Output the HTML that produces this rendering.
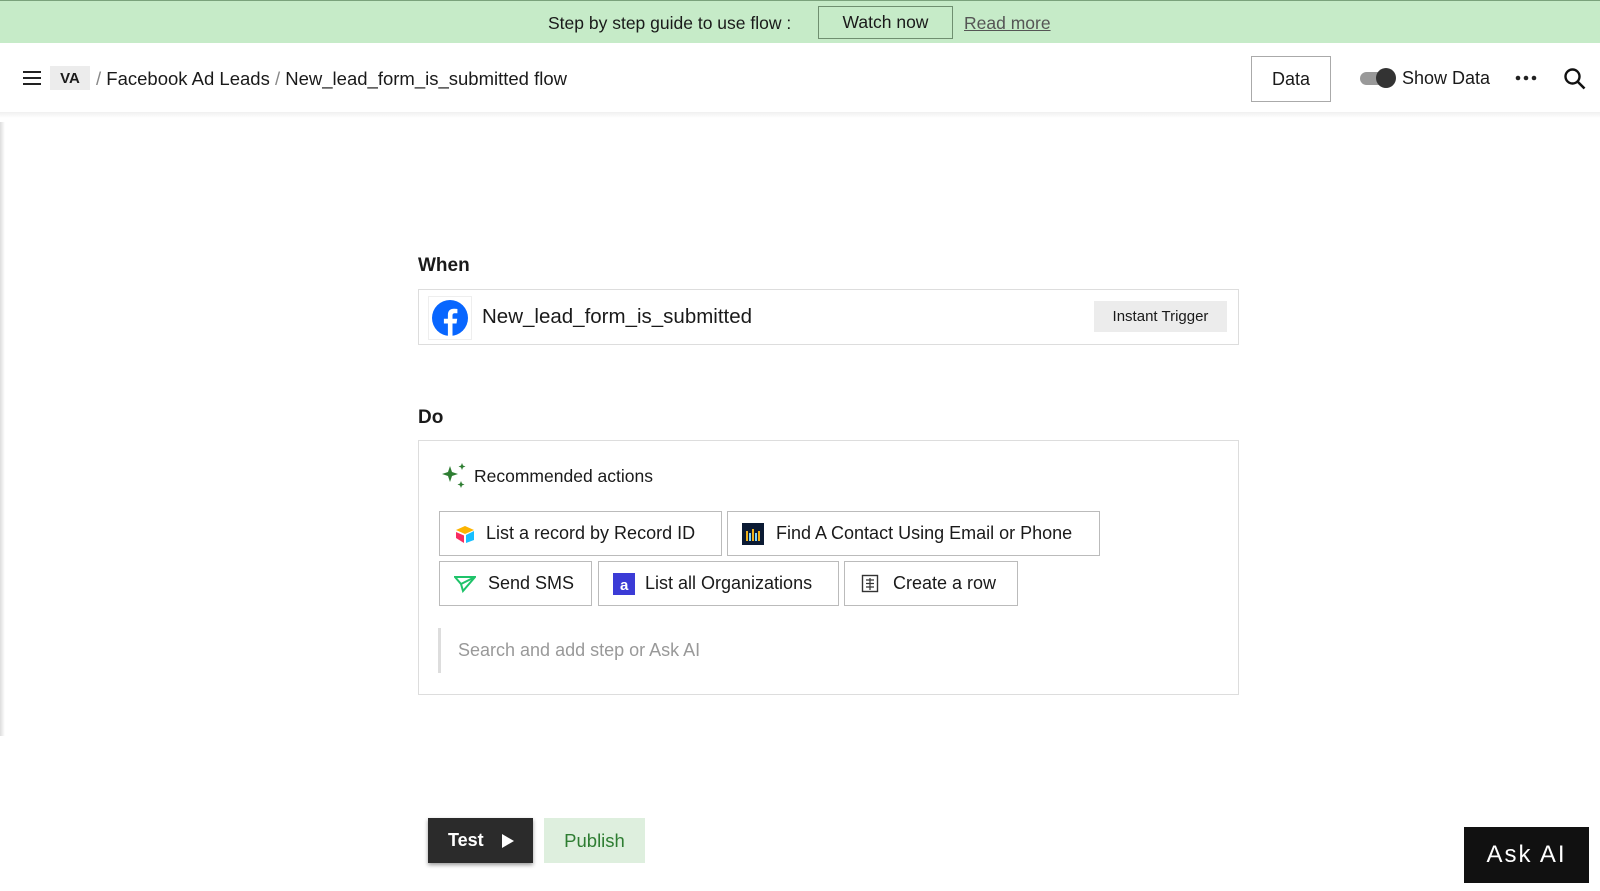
<!DOCTYPE html>
<html><head><meta charset="utf-8"><style>
*{box-sizing:border-box;margin:0;padding:0}
body{width:1600px;height:891px;background:#fff;font-family:"Liberation Sans",sans-serif;color:#1a1a1a;position:relative;overflow:hidden}
.banner{position:absolute;left:0;top:0;width:1600px;height:43px;background:#c6ebc8;border-top:1px solid #7aa27c;font-size:17.5px}
.abs{position:absolute}
.btn{position:absolute;border:1px solid #bbb;background:#fff;display:flex;align-items:center;font-size:18px}
.shadowline{position:absolute;left:0;top:112px;width:1600px;height:6px;background:linear-gradient(#f0f0f0,#fff)}
</style></head><body>
<div class="banner">
 <div class="abs" style="left:548px;top:12px">Step by step guide to use flow :</div>
 <div class="abs" style="left:818px;top:5px;width:135px;height:33px;border:1px solid #6f8f70;display:flex;align-items:center;justify-content:center">Watch now</div>
 <div class="abs" style="left:964px;top:12px;color:#555;text-decoration:underline">Read more</div>
</div>
<svg class="abs" style="left:22px;top:70px" width="20" height="16"><path d="M1 2h18M1 8h18M1 14h18" stroke="#222" stroke-width="2"/></svg>
<div class="abs" style="left:50px;top:66px;width:40px;height:24px;background:#ececec;font-size:15px;font-weight:bold;display:flex;align-items:center;justify-content:center">VA</div>
<div class="abs" style="left:96px;top:68px;font-size:18.5px"><span style="color:#888">/</span> Facebook Ad Leads <span style="color:#888">/</span> New_lead_form_is_submitted flow</div>
<div class="btn" style="left:1251px;top:56px;width:80px;height:46px;justify-content:center;border-color:#aaa">Data</div>
<div class="abs" style="left:1360px;top:72px;width:34px;height:13px;border-radius:7px;background:#999"></div>
<div class="abs" style="left:1376px;top:68px;width:20px;height:20px;border-radius:50%;background:#333"></div>
<div class="abs" style="left:1402px;top:68px;font-size:18px">Show Data</div>
<svg class="abs" style="left:1515px;top:74px" width="22" height="8"><circle cx="3" cy="4" r="2.3" fill="#222"/><circle cx="11" cy="4" r="2.3" fill="#222"/><circle cx="19" cy="4" r="2.3" fill="#222"/></svg>
<svg class="abs" style="left:1563px;top:67px" width="24" height="24"><circle cx="9.5" cy="9.5" r="7" fill="none" stroke="#111" stroke-width="2.4"/><path d="M14.5 14.5l7 7" stroke="#111" stroke-width="2.6"/></svg>
<div class="shadowline"></div>
<div class="abs" style="left:0;top:122px;width:5px;height:614px;background:linear-gradient(90deg,#ddd,#fff)"></div>

<div class="abs" style="left:418px;top:255px;font-size:19px;font-weight:bold">When</div>
<div class="abs" style="left:418px;top:289px;width:821px;height:56px;border:1px solid #ddd"></div>
<div class="abs" style="left:428px;top:296px;width:44px;height:44px;border:1px solid #eee"></div>
<svg class="abs" style="left:432px;top:300px" width="36" height="36" viewBox="0 0 36 36"><circle cx="18" cy="18" r="18" fill="#0866ff"/><path d="M20.5 36V23.5h4l.7-4.8h-4.7v-3c0-1.4.5-2.4 2.4-2.4h2.5V9c-.5-.1-2-.2-3.6-.2-3.6 0-5.9 2.1-5.9 6v3.9h-4v4.8h4V36z" fill="#fff"/></svg>
<div class="abs" style="left:482px;top:305px;font-size:20.5px">New_lead_form_is_submitted</div>
<div class="abs" style="left:1094px;top:301px;width:133px;height:31px;background:#ececec;font-size:15px;display:flex;align-items:center;justify-content:center">Instant Trigger</div>

<div class="abs" style="left:418px;top:407px;font-size:19px;font-weight:bold">Do</div>
<div class="abs" style="left:418px;top:440px;width:821px;height:255px;border:1px solid #ddd"></div>
<svg class="abs" style="left:440px;top:462px" width="28" height="28" viewBox="0 0 28 28"><path d="M10 4l2 6 6 2-6 2-2 6-2-6-6-2 6-2z" fill="#2e7d32"/><path d="M22 1l1 2.5 2.5 1-2.5 1-1 2.5-1-2.5-2.5-1 2.5-1z" fill="#2e7d32"/><path d="M21 19l1 2.5 2.5 1-2.5 1-1 2.5-1-2.5-2.5-1 2.5-1z" fill="#2e7d32"/></svg>
<div class="abs" style="left:474px;top:466px;font-size:17.5px">Recommended actions</div>

<div class="btn" style="left:439px;top:511px;width:283px;height:45px">
 <svg style="margin:0 10px 0 14px" width="22" height="20" viewBox="0 0 22 20"><path d="M2 6l9-4 9 4-9 4z" fill="#fcb400"/><path d="M12 11l8-4v9l-8 3z" fill="#18bfff"/><path d="M2 8l8 3.5v7.5L2 14z" fill="#f82b60"/></svg>List a record by Record ID</div>
<div class="btn" style="left:727px;top:511px;width:373px;height:45px">
 <svg style="margin:0 12px 0 14px" width="22" height="22"><rect width="22" height="22" fill="#0b1a33"/><path d="M5 18V8M11 18V6M17 18V8" stroke="#f0b21a" stroke-width="2"/><path d="M8 18V10M14 18V10" stroke="#7ad3ff" stroke-width="2"/></svg>Find A Contact Using Email or Phone</div>
<div class="btn" style="left:439px;top:561px;width:153px;height:45px">
 <svg style="margin:0 12px 0 14px" width="22" height="18" viewBox="0 0 22 18"><path d="M1 2h20L9 16l-2-7L1 2zM7 9l14-7" fill="none" stroke="#1fc36a" stroke-width="2"/></svg>Send SMS</div>
<div class="btn" style="left:598px;top:561px;width:241px;height:45px">
 <svg style="margin:0 10px 0 14px" width="22" height="22"><rect width="22" height="22" fill="#3b3bd6"/><text x="7" y="17" font-size="15" font-weight="bold" fill="#fff" font-family="Liberation Sans">a</text></svg>List all Organizations</div>
<div class="btn" style="left:844px;top:561px;width:174px;height:45px">
 <svg style="margin:0 12px 0 16px" width="20" height="20"><rect x="1.5" y="1.5" width="15" height="16" fill="none" stroke="#333" stroke-width="1.4"/><path d="M5 6h8M5 9.5h8M5 13h8M9 4v12" stroke="#333" stroke-width="1.2"/></svg>Create a row</div>

<div class="abs" style="left:438px;top:628px;width:3px;height:45px;background:#ddd"></div>
<div class="abs" style="left:458px;top:640px;font-size:18px;color:#999">Search and add step or Ask AI</div>

<div class="abs" style="left:428px;top:818px;width:105px;height:45px;background:#2b2b2b;box-shadow:0 2px 4px rgba(0,0,0,.4);color:#fff;font-size:18px;font-weight:bold;display:flex;align-items:center;padding-left:20px">Test<svg style="margin-left:18px" width="12" height="14"><path d="M0 0l12 7-12 7z" fill="#fff"/></svg></div>
<div class="abs" style="left:544px;top:818px;width:101px;height:45px;background:#deefde;color:#2e7d32;font-size:18.5px;display:flex;align-items:center;justify-content:center">Publish</div>
<div class="abs" style="left:1464px;top:827px;width:125px;height:56px;background:#111;color:#fff;font-size:24px;letter-spacing:2px;display:flex;align-items:center;justify-content:center">Ask AI</div>
</body></html>
